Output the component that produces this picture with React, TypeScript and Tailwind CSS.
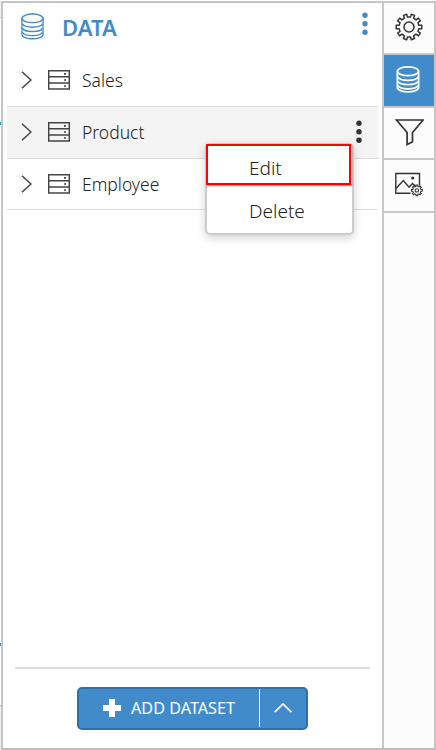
import React from "react";

function Database({ className, thin }: { className: string; thin?: boolean }) {
  return (
    <svg viewBox="0 0 24 28" className={className} fill="none" stroke="currentColor" strokeWidth={thin ? 1.4 : 1.8}>
      <ellipse cx="12" cy="5.5" rx="11" ry="4.5" />
      <path d="M1 5.5v16.8c0 2.5 4.9 4.5 11 4.5s11-2 11-4.5V5.5" />
      <path d="M1.5 11.2c1 2.1 5.2 3.6 10.5 3.6s9.5-1.5 10.5-3.6M1.5 15.7c1 2.1 5.2 3.6 10.5 3.6s9.5-1.5 10.5-3.6M1.5 20c1 2.1 5.2 3.6 10.5 3.6s9.5-1.5 10.5-3.6" />
    </svg>
  );
}

function Dots({ className }: { className: string }) {
  return (
    <svg viewBox="0 0 6 24" className={className} fill="currentColor">
      <circle cx="3" cy="3.2" r="2.7" />
      <circle cx="3" cy="11.8" r="2.7" />
      <circle cx="3" cy="20.3" r="2.7" />
    </svg>
  );
}

function ServerIcon() {
  return (
    <svg viewBox="0 0 22 20" className="ml-4 h-5 w-[22px]" fill="none" stroke="#444" strokeWidth="1.5">
      <path d="M.7.7h20.6v18.4H.7zM.7 6.8h20.6M.7 13h20.6" />
      <path d="M16 3.8h2M16 10h2M16 16h2" strokeWidth="1.7" />
    </svg>
  );
}

// Builds a closed gear outline centred on (14, 14).
function gearPath(teeth: number, start: number, inner: number, outer: number) {
  const step = 360 / teeth;
  const at = (r: number, deg: number) => {
    const a = (deg * Math.PI) / 180;
    return `${(14 + r * Math.cos(a)).toFixed(2)} ${(14 + r * Math.sin(a)).toFixed(2)}`;
  };
  const parts = Array.from({ length: teeth }, (_, i) => {
    const c = start + i * step;
    return [at(inner, c - step * 0.26), at(outer, c - step * 0.21), at(outer, c + step * 0.21), at(inner, c + step * 0.26)].join("L");
  });
  return `M${parts.join("L")}Z`;
}
const GEAR = gearPath(10, 0, 10, 12.9);
const SMALL_GEAR = gearPath(8, 0, 9.8, 13);

function Gear() {
  return (
    <svg viewBox="0 0 28 28" className="h-7 w-7" fill="none" stroke="#333" strokeWidth="1.5" strokeLinejoin="round">
      <path d={GEAR} />
      <circle cx="14" cy="14" r="5" />
    </svg>
  );
}

function Filter() {
  return (
    <svg viewBox="0 0 30 28" className="h-7 w-[30px]" fill="none" stroke="#333" strokeWidth="1.7">
      <path d="M2.5 2h26.6L18.500 14.500v9.300l-5.400 2.700V14.500z" />
    </svg>
  );
}

function Picture() {
  return (
    <svg viewBox="0 0 28 26" className="h-[26px] w-7" fill="none" stroke="#333" strokeWidth="1.4">
      <path d="M15.500 21.300H.8V1.500h23.700v12" />
      <path d="M1 16.500l7.300-8 5.800 6.800 3.400-3.800 3 2.800" />
      <circle cx="17.700" cy="6" r="1.600" fill="#333" stroke="none" />
      <g transform="translate(16 12.500) scale(.42)">
        <path d={SMALL_GEAR} strokeWidth="2.500" />
        <circle cx="14" cy="14" r="4" strokeWidth="2.500" />
      </g>
    </svg>
  );
}

function Row({ name, active, className }: { name: string; active?: boolean; className: string }) {
  return (
    <div className={`flex items-center border-b border-[#dcdcdc] pl-[14px] ${className}`}>
      <svg viewBox="0 0 11 18" className="h-[18px] w-[11px]" fill="none" stroke="#444" strokeWidth="1.5">
        <path d="M1 .8L10 9 1 17.2" />
      </svg>
      <ServerIcon />
      <span className="ml-3 text-[17.5px] leading-6 font-light">{name}</span>
      {active && <Dots className="mr-4 ml-auto h-6 w-1.5 text-[#333]" />}
    </div>
  );
}

export default function App() {
  return (
    <div className="relative flex h-[750px] w-[436px] overflow-hidden bg-white font-['Noto_Sans','Open_Sans',sans-serif] text-[#222]">
      <div className="flex w-px shrink-0 flex-col bg-white">
        <div className="h-[18px] border-b border-[#ccc] bg-[#f3f3f3]" />
        <div className="mt-[104px] h-[3px] bg-[#2196d8]" />
        <div className="mt-[518px] h-[3px] bg-[#2196d8]" />
        <div className="mt-[59px] h-[45px] border-t border-[#bbb] bg-[#eee]" />
      </div>
      <div className="mt-px flex h-[749px] w-[435px] border-2 border-[#c6c6c6] border-b-[#bdbdbd]">
        <main className="flex w-[379px] flex-col">
          <header className="flex h-[52px] items-start pl-[18px] text-[#428bca]">
            <Database className="mt-[10px] h-[27px] w-[23px]" thin />
            <h1 className="mt-2 ml-[18px] text-[22px] leading-8 font-semibold">DATA</h1>
            <Dots className="mt-[9px] mr-[14px] ml-auto h-6 w-1.5" />
          </header>
          <div className="mr-1 ml-1">
            <Row name="Sales" className="h-[52px] pb-0.5" />
            <Row name="Product" active className="h-[52px] bg-[#f4f4f4] pb-0.5" />
            <Row name="Employee" className="h-[51px] pb-px" />
          </div>
          <footer className="mt-auto mr-3 ml-3 h-[81px] border-t-2 border-[#dadada]">
            <div className="mt-[18px] ml-[62px] flex h-[43px] w-[231px] rounded-[5px] border-2 border-[#316fa6] bg-[#428bca] text-white">
              <button className="flex flex-1 items-center pl-6">
                <svg viewBox="0 0 18 18" className="mb-0.5 h-[18px] w-[18px]" fill="currentColor"><path d="M6 0h6v6h6v6h-6v6H6v-6H0V6h6z" /></svg>
                <span className="mb-px ml-[10px] text-[16.2px] whitespace-nowrap">ADD DATASET</span>
              </button>
              <button className="mb-px flex w-[47px] items-center justify-center border-l border-white">
                <svg viewBox="0 0 18 10" className="h-[10px] w-[18px]" fill="none" stroke="currentColor" strokeWidth="1.7"><path d="M.7 9.2L9 1l8.3 8.2" /></svg>
              </button>
            </div>
          </footer>
        </main>
        <nav className="flex w-[52px] flex-col border-l-2 border-[#c6c6c6] bg-[#fcfcfc]">
          <button className="flex h-[52px] items-center justify-center border-b-2 border-[#c6c6c6] pr-px pb-0.5"><Gear /></button>
          <button className="flex h-[53px] items-center justify-center border-b-2 border-[#c6c6c6] bg-[#428bca] pr-0.5 pb-0.5 text-white"><Database className="h-[27px] w-[24px]" /></button>
          <button className="flex h-[52px] items-center justify-center border-b-2 border-[#c6c6c6] pb-0.5"><Filter /></button>
          <button className="flex h-[53px] items-center justify-center border-b-2 border-[#c6c6c6] pb-px"><Picture /></button>
        </nav>
      </div>
      <div className="absolute top-[143px] left-[205px] h-[92px] w-[149px] rounded-[5px] border-2 border-[#ccc] bg-white text-[19px] font-light shadow-[0_3px_10px_rgba(0,0,0,0.18)]">
        <div className="flex h-[41px] items-center border-b-2 border-[#ccc] pt-[7px] pl-[42px]">Edit</div>
        <div className="flex h-[47px] items-center pt-1 pl-[42px]">Delete</div>
        <div className="absolute -top-px -left-px h-[41px] w-[145px] border-2 border-[#f00] shadow-[1px_1px_2px_rgba(0,0,0,0.3)]" />
      </div>
    </div>
  );
}
